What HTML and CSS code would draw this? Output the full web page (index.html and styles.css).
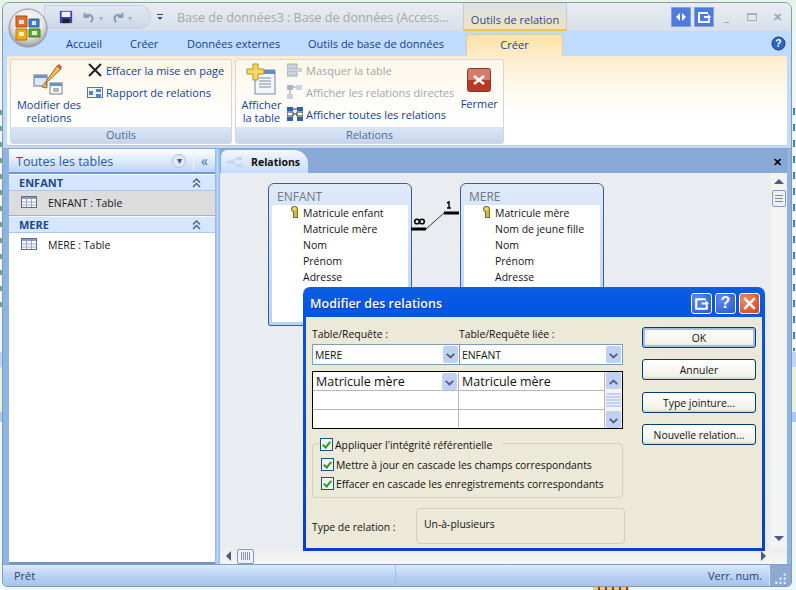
FILE: index.html
```html
<!DOCTYPE html>
<html lang="fr">
<head>
    <meta charset="UTF-8">
    <title>Base de données3 : Relations</title>
    <link rel="stylesheet" href="styles.css">
</head>
<body>
    <div class="backdrop">
        <div class="peek-right"></div>
        <div class="peek-left"></div>
        <div class="peek-bottom"></div>
    </div>
    <div class="window">
        <div class="titlebar">
            <div class="qat">
                <svg class="qat-icon save" viewBox="0 0 16 16"><rect x="1" y="1" width="14" height="14" fill="#3f3fa8"/><rect x="3" y="2" width="10" height="6" fill="#eef"/><rect x="4" y="10" width="8" height="5" fill="#222"/></svg>
                <svg class="qat-icon faded" viewBox="0 0 16 16"><path d="M3 3v5h5M3 8c3-4 9-3 9 2 0 2-1 3-2 4" fill="none" stroke="#8a9db8" stroke-width="2.4"/></svg>
                <span class="caret">▾</span>
                <svg class="qat-icon faded" viewBox="0 0 16 16"><path d="M13 3v5H8M13 8c-3-4-9-3-9 2 0 2 1 3 2 4" fill="none" stroke="#8a9db8" stroke-width="2.4"/></svg>
                <span class="caret">▾</span>
            </div>
            <div class="qat-more"></div>
            <div class="doc-title">Base de données3 : Base de données (Access...</div>
            <div class="context-tab">Outils de relation</div>
            <div class="win-buttons">
                <span class="blue-btn"><svg viewBox="0 0 18 18"><path d="M8 5 4 9l4 4zM10 5l4 4-4 4z" fill="#fff"/></svg></span>
                <span class="blue-btn"><svg viewBox="0 0 18 18"><path d="M3 4h10v2H5v7h8v-2h2v4H3z M9 8h4V6l3 3-3 3v-2H9z" fill="#fff"/></svg></span>
                <span class="ctl">_</span>
                <span class="ctl"><i class="ctl-max"></i></span>
                <span class="ctl ctl-x">✕</span>
            </div>
        </div>

        <div class="tabs">
            <span class="tab t1">Accueil</span>
            <span class="tab t2">Créer</span>
            <span class="tab t3">Données externes</span>
            <span class="tab t4">Outils de base de données</span>
            <span class="tab active">Créer</span>
            <svg class="help" viewBox="0 0 16 16"><circle cx="8" cy="8" r="7" fill="#2c66c4" stroke="#1b3f86"/><text x="8" y="12" font-size="11" font-weight="bold" text-anchor="middle" fill="#fff" font-family="Liberation Sans">?</text></svg>
        </div>

        <div class="ribbon">
            <section class="group outils">
                <div class="group-body">
                    <div class="big-btn modifier">
                        <svg class="big-icon" viewBox="0 0 32 32"><rect x="1" y="12" width="13" height="11" fill="#dfe8f5" stroke="#66799a"/><rect x="1" y="12" width="13" height="3" fill="#6f93c8"/><rect x="17" y="20" width="12" height="11" fill="#fff" stroke="#66799a"/><rect x="17" y="20" width="12" height="3" fill="#6f93c8"/><path d="M20 26h6M20 28h6" stroke="#667"/><path d="M13 20 14 25 9 24 24 3 28 6z" fill="#f2c14e" stroke="#8a6d2b"/><path d="M24 3l4 3 1-2-3-3z" fill="#c8564a"/></svg>
                        <span>Modifier des<br>relations</span>
                    </div>
                    <div class="small-list">
                        <div class="small-btn"><svg viewBox="0 0 16 16"><path d="M2 2l12 12M14 2 2 14" stroke="#222" stroke-width="2"/></svg>Effacer la mise en page</div>
                        <div class="small-btn"><svg viewBox="0 0 16 16"><rect x="0.5" y="3.5" width="15" height="10" fill="#eef3fb" stroke="#5a74a0"/><rect x="2" y="7" width="4" height="4" fill="#5a84c4"/><rect x="9" y="5" width="5" height="3" fill="#5a84c4"/><rect x="9" y="10" width="5" height="3" fill="#5a84c4"/></svg>Rapport de relations</div>
                    </div>
                </div>
                <div class="group-label">Outils</div>
            </section>
            <section class="group relations">
                <div class="group-body">
                    <div class="big-btn afficher">
                        <svg class="big-icon" viewBox="0 0 32 32"><rect x="9" y="7" width="20" height="24" fill="#f4f7fc" stroke="#7a8aa5"/><rect x="9" y="7" width="20" height="4" fill="#5f8ccc"/><path d="M13 15h12M13 18h12M13 21h12M13 24h12" stroke="#7c8aa0"/><path d="M7 1h5v5h6v5h-6v6H7v-6H1V6h6z" fill="#f5d95e" stroke="#b4922a"/></svg>
                        <span>Afficher<br>la table</span>
                    </div>
                    <div class="small-list">
                        <div class="small-btn off"><svg viewBox="0 0 16 16"><rect x="0" y="2" width="10" height="5" fill="#c9d2de" stroke="#a3adba"/><rect x="0" y="9" width="10" height="5" fill="#c9d2de" stroke="#a3adba"/><path d="M11 6h4v4h-4z" fill="#c9d2de"/></svg>Masquer la table</div>
                        <div class="small-btn off"><svg viewBox="0 0 16 16"><rect x="0" y="1" width="6" height="5" fill="#aab4c2"/><rect x="9" y="1" width="6" height="5" fill="#c9d2de"/><rect x="0" y="10" width="6" height="5" fill="#c9d2de"/><path d="M3 6v4M6 3h3" stroke="#999"/></svg>Afficher les relations directes</div>
                        <div class="small-btn"><svg viewBox="0 0 16 16"><rect x="0" y="1" width="6" height="4" fill="#2f5fae"/><rect x="10" y="1" width="6" height="4" fill="#2f5fae"/><rect x="0" y="6" width="6" height="4" fill="#fff" stroke="#234"/><rect x="10" y="6" width="6" height="4" fill="#fff" stroke="#234"/><rect x="0" y="11" width="6" height="4" fill="#2f5fae"/><rect x="10" y="11" width="6" height="4" fill="#2f5fae"/><path d="M6 3h4M6 8h4" stroke="#234"/></svg>Afficher toutes les relations</div>
                    </div>
                    <div class="big-btn fermer">
                        <svg class="close-icon" viewBox="0 0 24 24"><rect x="0.5" y="0.5" width="23" height="23" rx="2" fill="#d67a6c" stroke="#7d3a30"/><rect x="1" y="12" width="22" height="11" fill="#b93a22"/><path d="M7 8l10 8M17 8 7 16" stroke="#fff" stroke-width="2.6"/></svg>
                        <span>Fermer</span>
                    </div>
                </div>
                <div class="group-label">Relations</div>
            </section>
        </div>

        <div class="main">
            <aside class="nav">
                <div class="nav-head">
                    <span class="nav-title">Toutes les tables</span>
                    <span class="nav-drop">▾</span>
                    <span class="nav-collapse">«</span>
                </div>
                <div class="nav-group">ENFANT<svg class="chev" viewBox="0 0 9 10"><path d="M1 4.5 4.5 1 8 4.5M1 9 4.5 5.5 8 9" fill="none" stroke="#3f5f90" stroke-width="1.4"/></svg></div>
                <div class="nav-row selected"><svg class="tbl" viewBox="0 0 16 12"><rect x="0.5" y="0.5" width="15" height="11" fill="#fff" stroke="#5f6c85"/><rect x="1" y="1" width="14" height="2" fill="#8c9ac0"/><path d="M1 6h14M1 9h14M5.5 3v8M10.5 3v8" stroke="#9aa6c4"/></svg>ENFANT : Table</div>
                <div class="nav-group">MERE<svg class="chev" viewBox="0 0 9 10"><path d="M1 4.5 4.5 1 8 4.5M1 9 4.5 5.5 8 9" fill="none" stroke="#3f5f90" stroke-width="1.4"/></svg></div>
                <div class="nav-row"><svg class="tbl" viewBox="0 0 16 12"><rect x="0.5" y="0.5" width="15" height="11" fill="#fff" stroke="#5f6c85"/><rect x="1" y="1" width="14" height="2" fill="#8c9ac0"/><path d="M1 6h14M1 9h14M5.5 3v8M10.5 3v8" stroke="#9aa6c4"/></svg>MERE : Table</div>
            </aside>
            <div class="splitter"></div>
            <div class="doc">
                <div class="doc-tabs">
                    <div class="doc-tab">
                        <svg viewBox="0 0 22 14"><rect x="0" y="5" width="7" height="4" fill="#c8d6ea"/><rect x="13" y="0" width="8" height="4" fill="#c8d6ea"/><rect x="13" y="10" width="8" height="4" fill="#c8d6ea"/><path d="M7 7l6-5M7 7l6 5" stroke="#a8bcd8"/></svg>
                        Relations
                    </div>
                    <span class="doc-close">✕</span>
                </div>
                <div class="doc-body">
                    <div class="canvas">
                        <div class="field-list enfant">
                            <div class="field-title">ENFANT</div>
                            <div class="field-rows">
                                <div class="field key">Matricule enfant</div>
                                <div class="field">Matricule mère</div>
                                <div class="field">Nom</div>
                                <div class="field">Prénom</div>
                                <div class="field">Adresse</div>
                            </div>
                        </div>
                        <div class="field-list mere">
                            <div class="field-title">MERE</div>
                            <div class="field-rows">
                                <div class="field key">Matricule mère</div>
                                <div class="field">Nom de jeune fille</div>
                                <div class="field">Nom</div>
                                <div class="field">Prénom</div>
                                <div class="field">Adresse</div>
                            </div>
                        </div>
                        <svg class="link" viewBox="0 0 50 30">
                            <path d="M0 25h15M33 9h15" stroke="#000" stroke-width="3" fill="none"/>
                            <path d="M15 25 33 9" stroke="#333" fill="none"/>
                            <circle cx="6" cy="17.5" r="2.3" fill="none" stroke="#000" stroke-width="1.6"/>
                            <circle cx="11" cy="17.5" r="2.3" fill="none" stroke="#000" stroke-width="1.6"/>
                            <path d="M36 -1l2-1v6M36 4h4" stroke="#000" stroke-width="1.4" fill="none"/>
                        </svg>
                    </div>
                    <div class="vscroll">
                        <span class="arr-up"></span>
                        <span class="thumb-v"></span>
                        <span class="arr-down"></span>
                    </div>
                    <div class="hscroll">
                        <span class="arr-left"></span>
                        <span class="thumb-h"></span>
                        <span class="arr-right"></span>
                    </div>
                </div>
            </div>
        </div>

        <div class="statusbar">
            <span class="status-left">Prêt</span>
            <span class="status-mid"></span>
            <span class="status-right">Verr. num.</span>
            <span class="grip"><svg viewBox="0 0 20 20"><path d="M13 8h2v2h-2zM9 12h2v2H9zM13 12h2v2h-2zM5 16h2v2H5zM9 16h2v2H9zM13 16h2v2h-2z" fill="#e6eef9"/></svg></span>
        </div>
    </div>

    <svg class="orb" viewBox="0 0 40 40">
        <defs>
            <radialGradient id="orbfill" cx="50%" cy="35%" r="65%">
                <stop offset="0" stop-color="#ffffff"/>
                <stop offset="0.6" stop-color="#e8e9ea"/>
                <stop offset="1" stop-color="#9a9c9e"/>
            </radialGradient>
        </defs>
        <circle cx="20" cy="20" r="19" fill="url(#orbfill)" stroke="#8d9199"/>
        <path d="M8 8h11v11H8z" fill="#e8701c" stroke="#a84a10"/>
        <path d="M11 12h5v4h-5z" fill="#fbe9d4"/>
        <path d="M21 11h10v8H21z" fill="#3f7fd0" stroke="#2a5a9c"/>
        <path d="M24 13h4v4h-4z" fill="#d8e8fa"/>
        <path d="M8 21h11v11H8z" fill="#f2a81c" stroke="#b97a10"/>
        <path d="M11 24h5v4h-5z" fill="#fdf1cc"/>
        <path d="M21 21h11v8H21z" fill="#62ab2e" stroke="#437d1c"/>
        <path d="M24 23h5v4h-5z" fill="#e2f4cf"/>
    </svg>

    <div class="dialog">
        <div class="dialog-title">
            <span class="dialog-name">Modifier des relations</span>
            <span class="xp-btn"><svg viewBox="0 0 18 18"><path d="M3 4h10v2H5v7h8v-2h2v4H3z M9 8h4V6l3 3-3 3v-2H9z" fill="#fff"/></svg></span>
            <span class="xp-btn help-btn">?</span>
            <span class="xp-btn close-btn"><svg viewBox="0 0 18 18"><path d="M4 4l10 10M14 4 4 14" stroke="#fff" stroke-width="2.4"/></svg></span>
        </div>
        <div class="dialog-body">
            <div class="dialog-left">
                <div class="combo-labels"><span>Table/Requête :</span><span>Table/Requête liée :</span></div>
                <div class="combos">
                    <div class="combo">MERE<i class="drop"></i></div>
                    <div class="combo">ENFANT<i class="drop"></i></div>
                </div>
                <div class="grid-wrap">
                    <div class="grid">
                        <div class="cell big">Matricule mère<i class="drop"></i></div>
                        <div class="cell big">Matricule mère</div>
                        <div class="cell"></div><div class="cell"></div>
                        <div class="cell"></div><div class="cell"></div>
                    </div>
                    <div class="grid-scroll">
                        <i class="drop up"></i>
                        <i class="grid-thumb"></i>
                        <i class="drop"></i>
                    </div>
                </div>
                <div class="checks">
                    <label class="check legend"><i class="box"></i>Appliquer l'intégrité référentielle</label>
                    <label class="check"><i class="box"></i>Mettre à jour en cascade les champs correspondants</label>
                    <label class="check"><i class="box"></i>Effacer en cascade les enregistrements correspondants</label>
                </div>
                <div class="rel-type">
                    <span>Type de relation :</span>
                    <div class="rel-value">Un-à-plusieurs</div>
                </div>
            </div>
            <div class="dialog-right">
                <button class="xp default">OK</button>
                <button class="xp">Annuler</button>
                <button class="xp">Type jointure...</button>
                <button class="xp">Nouvelle relation...</button>
            </div>
        </div>
    </div>
</body>
</html>
```
FILE: styles.css
```css
html, body {
    margin: 0;
    height: 590px;
    overflow: hidden;
}
body {
    position: relative;
    font-family: "Open Sans", "Liberation Sans", sans-serif;
    font-size: 11px;
    color: #15428b;
    background: #f2f7f2;
}
svg {
    display: block;
    flex: none;
}

/* desktop peeking out round the window */
.backdrop {
    position: absolute;
    inset: 0;
    overflow: hidden;
    background: linear-gradient(#e6f6e6 0, #eef8fb 60px, #eef8fb 352px, #bcd8f4 352px, #bcd8f4 367px, #e2f4dc 367px, #e2f4dc 412px, #a8ccf2 412px, #a8ccf2 422px, #eaf7fb 422px);
}
.peek-right {
    position: absolute;
    left: 793px;
    top: 106px;
    width: 2px;
    height: 245px;
    background: repeating-linear-gradient(transparent 0 2px, #3f82ad 2px 9px, transparent 9px 16px);
}
.peek-left {
    position: absolute;
    left: 0;
    top: 106px;
    width: 2px;
    height: 210px;
    background: repeating-linear-gradient(transparent 0 4px, #6aa87e 4px 9px, transparent 9px 16px);
}
.peek-bottom {
    position: absolute;
    left: 593px;
    top: 587px;
    width: 36px;
    height: 3px;
    background: repeating-linear-gradient(90deg, #f4cc5a 0 5px, #a8321c 5px 7px);
}

/* main window */
.window {
    position: absolute;
    left: 2px;
    top: 2px;
    width: 788px;
    height: 583px;
    border: 1px solid #8e99a8;
    border-radius: 7px 7px 5px 5px;
    background: #bfdbff;
    overflow: hidden;
    display: flex;
    flex-direction: column;
}
.orb {
    position: absolute;
    left: 8px;
    top: 8px;
    width: 40px;
    height: 40px;
}
.titlebar {
    height: 28px;
    flex: none;
    background: linear-gradient(#e9edf3, #d8dfe9);
    display: flex;
    align-items: center;
    position: relative;
    padding-left: 44px;
}
.qat {
    display: flex;
    align-items: center;
    height: 22px;
    width: 105px;
    padding-left: 14px;
    margin-left: -2px;
    background: linear-gradient(#e2e8f2, #ccd7e6);
    border-radius: 0 11px 11px 0;
    box-sizing: border-box;
    box-shadow: 0 0 0 1px #c6d0e0;
}
.qat-icon {
    width: 14px;
    height: 14px;
}
.save {
    margin-right: 9px;
}
.caret {
    color: #a4b2c4;
    font-size: 8px;
    margin: 0 8px 0 3px;
}
.qat-more {
    width: 6px;
    height: 5px;
    margin-left: 7px;
    flex: none;
    border-top: 1px solid #2f4a78;
    background: linear-gradient(transparent 40%, #2f4a78 40%);
    clip-path: polygon(0 0, 100% 0, 100% 40%, 50% 100%, 0 40%);
}
.doc-title {
    margin-left: 14px;
    width: 286px;
    flex: none;
    font-size: 12.5px;
    color: #a4a8ae;
    white-space: nowrap;
}
.context-tab {
    width: 104px;
    flex: none;
    height: 28px;
    line-height: 34px;
    box-sizing: border-box;
    text-align: center;
    color: #2c4a8c;
    font-size: 11px;
    background: linear-gradient(#dde1e8, #efe3bf);
    border-bottom: 2px solid #f4c04e;
    border-left: 1px solid #c6ccd6;
    border-right: 1px solid #c6ccd6;
}
.win-buttons {
    margin-left: 104px;
    display: flex;
    align-items: center;
}
.blue-btn {
    width: 20px;
    height: 20px;
    background: #4e79e0;
    border: 1px solid #8aa2d8;
    box-sizing: border-box;
}
.blue-btn + .blue-btn {
    margin-left: 3px;
}
.ctl {
    width: 25.5px;
    text-align: center;
    color: #9aa5b3;
    font-size: 12px;
    font-weight: bold;
    line-height: 20px;
}
.ctl-max {
    display: inline-block;
    width: 8px;
    height: 5px;
    border: 1px solid #a5afbc;
    border-top-width: 2px;
}
.ctl-x {
    font-size: 11px;
}

.tabs {
    height: 25px;
    flex: none;
    position: relative;
    background: #bfdbff;
}
.tab {
    position: absolute;
    top: 5px;
    color: #15428b;
}
.t1 { left: 63px; }
.t2 { left: 127px; }
.t3 { left: 184px; }
.t4 { left: 305px; }
.tab.active {
    left: 463px;
    top: 3px;
    width: 97px;
    height: 22px;
    line-height: 20px;
    text-align: center;
    box-sizing: border-box;
    border: 1px solid #dbce99;
    border-bottom: none;
    border-radius: 3px 3px 0 0;
    background: linear-gradient(#fde2a3, #fdeccb);
}
.help {
    position: absolute;
    right: 5px;
    top: 5px;
    width: 15px;
    height: 15px;
}

/* ribbon */
.ribbon {
    height: 89px;
    flex: none;
    margin: 0 4px 0 4px;
    padding: 3px 3px 0 3px;
    box-sizing: border-box;
    display: flex;
    gap: 3px;
    background: linear-gradient(#fdeccb, #fffaf0 40%, #fff 70%);
    border-radius: 2px;
    box-shadow: 0 1px 0 #c4cad4;
}
.group {
    height: 85px;
    box-sizing: border-box;
    border: 1px solid #d4d6dc;
    border-radius: 3px;
    background: linear-gradient(#fdf7ea, #fff 75%);
    display: flex;
    flex-direction: column;
}
.outils { width: 222px; }
.relations { width: 269px; }
.group-body {
    flex: 1;
    display: flex;
}
.group-label {
    height: 16px;
    line-height: 15px;
    text-align: center;
    color: #4f6c9c;
    background: linear-gradient(#dbe6f4, #c5d6ec);
}
.big-btn {
    display: flex;
    flex-direction: column;
    align-items: center;
    text-align: center;
    line-height: 13px;
    color: #15428b;
}
.big-btn span {
    margin-top: auto;
    padding-bottom: 3px;
}
.big-icon {
    width: 32px;
    height: 32px;
    margin-top: 3px;
}
.modifier { width: 76px; }
.afficher { width: 51px; }
.fermer { width: 40px; margin-left: 5px; }
.big-btn.fermer span { margin-top: 5px; }
.close-icon {
    width: 24px;
    height: 24px;
    margin-top: 8px;
}
.small-list {
    display: flex;
    flex-direction: column;
    padding-top: 2px;
    gap: 6px;
}
.small-btn {
    display: flex;
    align-items: center;
    gap: 3px;
    height: 16px;
    white-space: nowrap;
    color: #15428b;
}
.small-btn svg {
    width: 16px;
    height: 16px;
}
.small-btn.off {
    color: #a3a6ab;
}

/* nav pane + doc area */
.main {
    flex: 1;
    min-height: 0;
    display: flex;
    margin-top: 3px;
    padding-left: 6px;
    padding-right: 4px;
    border-top: 1px solid #8aa6cc;
    background: #8eb4e6;
}
.nav {
    width: 206px;
    flex: none;
    background: #fff;
    border-bottom: 2px solid #6f95c8;
    box-sizing: border-box;
}
.nav-head {
    height: 25px;
    box-sizing: border-box;
    display: flex;
    align-items: center;
    background: linear-gradient(#fff, #bcd6f5);
    border-bottom: 2px solid #6c98d4;
    font-size: 12.5px;
    color: #2a5aa0;
    padding-left: 7px;
    padding-top: 1px;
}
.nav-title {
    flex: 1;
}
.nav-drop {
    width: 12px;
    height: 12px;
    line-height: 11px;
    text-align: center;
    font-size: 10px;
    color: #3a5a8c;
    border-radius: 50%;
    background: #e2eaf4;
    border: 1px solid #b0c0d6;
    margin-right: 7px;
}
.nav-collapse {
    width: 21px;
    text-align: center;
    border-left: 1px solid #eef4fc;
    font-size: 14px;
    line-height: 20px;
    color: #4a6ea8;
}
.nav-group {
    height: 17px;
    box-sizing: border-box;
    line-height: 15px;
    padding-left: 10px;
    padding-right: 14px;
    background: #d6e6fc;
    border-bottom: 1px solid #a8c8f0;
    border-top: 1px solid #f4f8ff;
    font-weight: bold;
    color: #1c4a8c;
    display: flex;
    align-items: center;
    justify-content: space-between;
}
.chev {
    width: 9px;
    height: 10px;
}
.nav-row {
    height: 24px;
    box-sizing: border-box;
    padding-bottom: 1px;
    display: flex;
    align-items: center;
    gap: 11px;
    padding-left: 12px;
    color: #14181f;
    font-size: 10.5px;
}
.nav-row.selected {
    height: 25px;
    background: #dcdcdc;
    border-bottom: 1px solid #a9b4c2;
}
.tbl {
    width: 16px;
    height: 12px;
    margin-top: -2px;
}
.splitter {
    width: 5px;
    flex: none;
    background: linear-gradient(90deg, #8eb4e6, #bcd6f8 50%, #8eb4e6);
}
.doc {
    flex: 1;
    min-width: 0;
    display: flex;
    flex-direction: column;
    background: #e9edf2;
}
.doc-tabs {
    height: 24px;
    flex: none;
    background: #88a8d6;
    display: flex;
    align-items: center;
    justify-content: space-between;
    padding-left: 1px;
}
.doc-tab {
    width: 87px;
    height: 23px;
    margin-top: 1px;
    display: flex;
    align-items: center;
    gap: 8px;
    padding-left: 6px;
    box-sizing: border-box;
    background: linear-gradient(#f4f8ff, #c4dcfa);
    border-radius: 6px 14px 0 0;
    color: #101010;
    font-weight: bold;
    font-size: 10.5px;
}
.doc-tab svg {
    width: 16px;
    height: 12px;
}
.doc-close {
    color: #000;
    font-size: 11px;
    font-weight: bold;
    margin-right: 5px;
}
.doc-body {
    flex: 1;
    min-height: 0;
    display: grid;
    grid-template-columns: 1fr 16px;
    grid-template-rows: 1fr 16px;
}
.canvas {
    position: relative;
    background: #e9edf2;
    overflow: hidden;
}

/* field lists in the relations diagram */
.field-list {
    position: absolute;
    top: 10px;
    width: 144px;
    height: 143px;
    box-sizing: border-box;
    border: 1px solid #3d5c8f;
    border-radius: 6px 6px 2px 2px;
    background: linear-gradient(#dfeafa, #b9d3f5);
    padding: 0 3px 3px;
}
.enfant { left: 48px; }
.mere { left: 240px; }
.field-title {
    height: 21px;
    line-height: 26px;
    padding-left: 5px;
    font-size: 12px;
    color: #717884;
}
.field-rows {
    height: 117px;
    background: #fff;
    box-sizing: border-box;
}
.field {
    height: 16px;
    line-height: 16px;
    padding-left: 31px;
    font-size: 10.5px;
    color: #1a1020;
    position: relative;
}
.field.key::before {
    content: "";
    position: absolute;
    left: 19px;
    top: 1px;
    width: 5px;
    height: 4px;
    border: 1px solid #7a6a20;
    border-radius: 50%;
    background: #f0d870;
}
.field.key::after {
    content: "";
    position: absolute;
    left: 21px;
    top: 6px;
    width: 3px;
    height: 6px;
    background: #d8b840;
    border: 1px solid #7a6a20;
    border-top: none;
}
.link {
    position: absolute;
    left: 191px;
    top: 31px;
    width: 50px;
    height: 30px;
    overflow: visible;
}

/* scrollbars */
.vscroll {
    grid-row: 1;
    grid-column: 2;
    background: linear-gradient(90deg, #f4f4f2, #f0f1f2);
    display: flex;
    flex-direction: column;
    align-items: center;
    position: relative;
    padding-top: 6px;
}
.arr-up {
    border: 5px solid transparent;
    border-top: none;
    border-bottom: 5px solid #4a5a80;
}
.arr-down {
    margin-top: auto;
    margin-bottom: 7px;
    border: 5px solid transparent;
    border-bottom: none;
    border-top: 5px solid #4a5a80;
}
.thumb-v {
    width: 14px;
    height: 17px;
    margin-top: 6px;
    border: 1px solid #8a98b0;
    border-radius: 2px;
    box-sizing: border-box;
    background: linear-gradient(#7f8898, #7f8898) center 4px / 8px 1px no-repeat,
        linear-gradient(#7f8898, #7f8898) center 7px / 8px 1px no-repeat,
        linear-gradient(#7f8898, #7f8898) center 10px / 8px 1px no-repeat,
        #eef1f5;
}
.hscroll {
    grid-row: 2;
    grid-column: 1 / 3;
    background: linear-gradient(#ebeced, #f6f6f6);
    display: flex;
    align-items: center;
    padding-left: 6px;
}
.arr-left {
    border: 5px solid transparent;
    border-left: none;
    border-right: 5px solid #4a5a80;
}
.arr-right {
    margin-left: auto;
    margin-right: 21px;
    border: 5px solid transparent;
    border-right: none;
    border-left: 5px solid #4a5a80;
}
.thumb-h {
    width: 17px;
    height: 15px;
    margin-left: 6px;
    border: 1px solid #8a98b0;
    border-radius: 2px;
    box-sizing: border-box;
    background: repeating-linear-gradient(90deg, #8a93a4 0 1px, transparent 1px 2px) center / 9px 8px no-repeat, #eef1f5;
}

.statusbar {
    height: 22px;
    flex: none;
    display: flex;
    align-items: center;
    background: linear-gradient(#dbeafd, #bcd4f4 45%, #a8c4ea);
    border-top: 1px solid #7f9ec8;
    color: #2a3f78;
    box-sizing: border-box;
}
.status-left {
    width: 392px;
    padding-left: 11px;
    box-sizing: border-box;
    flex: none;
}
.status-mid {
    flex: 1;
    align-self: stretch;
    border-left: 1px solid #a4bee2;
}
.status-right {
    margin-right: 7px;
}
.grip {
    width: 21px;
    align-self: stretch;
    background: #8eaad2;
    border-left: 1px solid #dbe6f6;
}

/* XP dialog on top of the window */
.dialog {
    position: absolute;
    left: 303px;
    top: 287px;
    width: 462px;
    height: 264px;
    border-radius: 7px 7px 0 0;
    background: linear-gradient(#0a5ee0, #0456e4 8%, #0a3ecc);
    padding: 0 3px 3px;
    box-sizing: border-box;
    color: #111;
    font-size: 10.4px;
    display: flex;
    flex-direction: column;
}
.dialog-title {
    height: 30px;
    flex: none;
    display: flex;
    align-items: center;
    gap: 3px;
    padding: 2px 2px 0 4px;
    box-sizing: border-box;
}
.dialog-name {
    flex: 1;
    color: #fff;
    font-size: 12.5px;
    font-weight: 600;
    text-shadow: 1px 1px 0 #0a3a9c;
}
.xp-btn {
    width: 21px;
    height: 21px;
    box-sizing: border-box;
    border: 1px solid #fff;
    border-radius: 3px;
    background: radial-gradient(circle at 30% 30%, #5c8cf0, #2a55d0);
    display: flex;
    align-items: center;
    justify-content: center;
    color: #fff;
    font: bold 16px "Liberation Sans", sans-serif;
}
.close-btn {
    background: radial-gradient(circle at 30% 30%, #ee8a68, #d04018);
}
.dialog-body {
    flex: 1;
    min-height: 0;
    background: #ece9d8;
    display: flex;
    padding: 10px 6px 0 6px;
}
.dialog-left {
    width: 311px;
    flex: none;
    display: flex;
    flex-direction: column;
}
.combo-labels {
    display: flex;
    height: 17px;
}
.combo-labels span:first-child {
    width: 147px;
}
.combos {
    display: flex;
    height: 21px;
    border: 1px solid #7f9db9;
    background: #fff;
    box-sizing: border-box;
}
.combo {
    width: 147px;
    box-sizing: border-box;
    display: flex;
    align-items: center;
    justify-content: space-between;
    padding: 0 1px 0 2px;
    border-right: 1px solid #7f9db9;
}
.combo:last-child {
    flex: 1;
    border-right: none;
}
.drop {
    width: 15px;
    height: 17px;
    flex: none;
    box-sizing: border-box;
    border-radius: 2px;
    background: #c2d0f4;
    position: relative;
    display: block;
}
.drop::after {
    content: "";
    position: absolute;
    left: 4px;
    top: 5px;
    width: 5px;
    height: 5px;
    border: solid #4d6185;
    border-width: 0 2px 2px 0;
    transform: scale(0.9, 0.8) rotate(45deg);
}
.drop.up::after {
    top: 8px;
    transform: scale(0.9, 0.8) rotate(225deg);
}
.grid-wrap {
    margin-top: 6px;
    height: 58px;
    display: flex;
    border: 1px solid #000;
    background: #fff;
    box-sizing: border-box;
}
.grid {
    flex: 1;
    display: grid;
    grid-template-columns: 146px 1fr;
    grid-template-rows: 19px 19px 1fr;
}
.cell {
    border-right: 1px solid #b8b8b8;
    border-bottom: 1px solid #b8b8b8;
    display: flex;
    align-items: center;
    justify-content: space-between;
    padding: 0 1px 0 3px;
}
.cell:nth-last-child(-n+2) {
    border-bottom: none;
}
.cell.big {
    font-size: 12.5px;
}
.grid-scroll {
    width: 17px;
    flex: none;
    display: flex;
    flex-direction: column;
    justify-content: space-between;
    align-items: center;
    background: #f4f4ee;
}
.grid-thumb {
    width: 15px;
    height: 15px;
    background: repeating-linear-gradient(#c2d0f4 0 2px, #eef2fc 2px 3px);
    border-radius: 2px;
}
.checks {
    margin-top: 14px;
    height: 55px;
    border: 1px solid #d0d0bf;
    border-radius: 4px;
    box-sizing: border-box;
    padding-top: 11px;
    padding-left: 8px;
    position: relative;
}
.check {
    display: flex;
    align-items: center;
    height: 19px;
    white-space: nowrap;
}
.check.legend {
    position: absolute;
    left: 7px;
    top: -7px;
    height: 15px;
    padding-right: 10px;
    background: #ece9d8;
}
.box {
    width: 11px;
    height: 11px;
    border: 1px solid #1c5180;
    background: #f4f4ee;
    margin-right: 2px;
    position: relative;
}
.box::after {
    content: "";
    position: absolute;
    left: 3px;
    top: 1px;
    width: 3px;
    height: 6px;
    border: solid #21a121;
    border-width: 0 2px 2px 0;
    transform: rotate(40deg);
}
.rel-type {
    margin-top: 10px;
    display: flex;
    align-items: center;
}
.rel-type span {
    width: 104px;
    flex: none;
    padding-top: 2px;
}
.rel-value {
    width: 209px;
    height: 36px;
    flex: none;
    box-sizing: border-box;
    border: 1px solid #d0d0bf;
    border-radius: 4px;
    padding: 8px 7px;
}
.dialog-right {
    margin-left: 19px;
    width: 114px;
    flex: none;
    display: flex;
    flex-direction: column;
    gap: 11px;
}
.xp {
    height: 21px;
    padding: 0;
    border: 1px solid #003c74;
    border-radius: 3px;
    background: linear-gradient(#fff, #f2f1e8 85%, #d6d0c5);
    font: inherit;
    color: #111;
}
.xp:nth-child(3) {
    margin-top: 1px;
}
.xp.default {
    box-shadow: inset 0 0 0 2px #a4bde8;
}
```
